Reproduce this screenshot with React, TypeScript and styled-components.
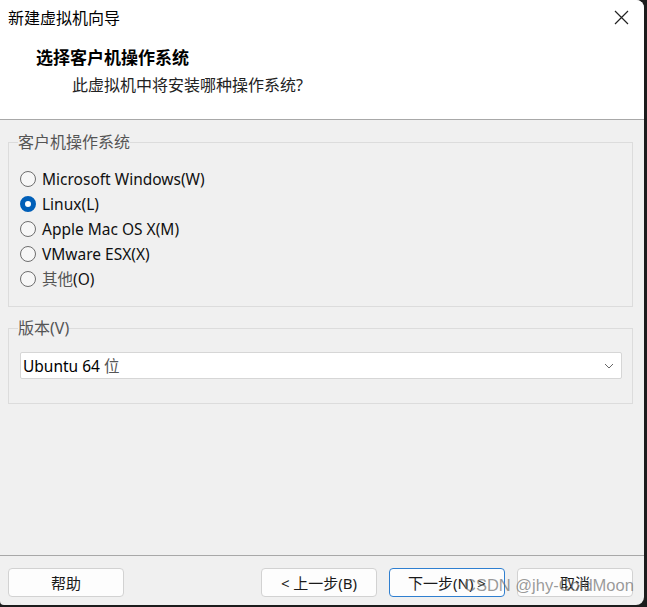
import React, { useState } from 'react';
import styled, { createGlobalStyle } from 'styled-components';

const GlobalStyle = createGlobalStyle`
  html, body {
    margin: 0;
    padding: 0;
    background: #1c1c1c;
  }
  * {
    box-sizing: border-box;
  }
`;

const UI_FONT = `"Noto Sans", "Noto Sans CJK SC", sans-serif`;

const Window = styled.div`
  width: 644px;
  height: 605px;
  background: #f0f0f0;
  border-radius: 0 8px 8px 4px;
  overflow: hidden;
  display: flex;
  flex-direction: column;
  position: relative;
  font-family: ${UI_FONT};
  color: #1a1a1a;
`;

const TopArea = styled.div`
  background: #ffffff;
  height: 120px;
  border-bottom: 1px solid #a8a8a8;
  display: flex;
  flex-direction: column;
`;

const TitleBar = styled.div`
  height: 34px;
  display: flex;
  align-items: center;
  justify-content: space-between;
  padding: 0 14px 0 8px;
`;

const Title = styled.span`
  font-size: 16px;
  color: #000;
`;

const CloseButton = styled.button`
  border: none;
  background: transparent;
  padding: 0;
  width: 18px;
  height: 18px;
  display: flex;
  align-items: center;
  justify-content: center;
  cursor: pointer;
`;

const Header = styled.div`
  padding: 12px 0 0 36px;
`;

const Heading = styled.div`
  font-size: 17px;
  font-weight: 700;
  line-height: 24px;
  color: #000;
`;

const SubHeading = styled.div`
  font-size: 16px;
  line-height: 24px;
  padding-left: 36px;
  margin-top: 3px;
  color: #222;
`;

const Body = styled.div`
  flex: 1;
  padding: 12px 11px 0 8px;
  display: flex;
  flex-direction: column;
  gap: 11px;
`;

const Group = styled.fieldset<{ $pad: string }>`
  margin: 0;
  border: 1px solid #dcdcdc;
  padding: ${p => p.$pad};
  min-width: 0;
`;

const Legend = styled.legend`
  font-size: 16px;
  line-height: 20px;
  color: #555;
  padding: 0;
  margin-left: -2px;
`;

const RadioList = styled.div`
  display: flex;
  flex-direction: column;
`;

const RadioRow = styled.label`
  height: 25px;
  display: flex;
  align-items: center;
  gap: 6px;
  font-size: 15.5px;
  color: #111;
  cursor: pointer;
`;

const RadioCircle = styled.span<{ $checked: boolean }>`
  width: 16px;
  height: 16px;
  border-radius: 50%;
  flex-shrink: 0;
  border: ${p => (p.$checked ? '5px solid #005fb8' : '1px solid #6e6e6e')};
  background: ${p => (p.$checked ? '#ffffff' : '#f7f7f7')};
`;

const Cjk = styled.span`
  color: #555;
`;

const Select = styled.div`
  height: 27px;
  background: #ffffff;
  border: 1px solid #d6d6d6;
  border-radius: 2px;
  display: flex;
  align-items: center;
  justify-content: space-between;
  padding: 0 7px 0 2px;
  font-size: 15.5px;
  color: #000;
`;

const Footer = styled.div`
  height: 50px;
  border-top: 1px solid #a8a8a8;
  padding: 12px 11px 0 8px;
  display: flex;
  align-items: flex-start;
`;

const ButtonGroup = styled.div`
  margin-left: auto;
  display: flex;
  gap: 12px;
`;

const Button = styled.button<{ $primary?: boolean }>`
  width: 116px;
  height: 29px;
  background: #fdfdfd;
  border: 1px solid ${p => (p.$primary ? '#2f7fd0' : '#d2d2d2')};
  border-radius: 4px;
  font-family: ${UI_FONT};
  font-size: 15px;
  color: #1a1a1a;
  padding: 0;
  cursor: pointer;
`;

const Watermark = styled.div`
  position: absolute;
  left: 464px;
  top: 576px;
  font-family: "Liberation Sans", Arial, sans-serif;
  font-size: 16.5px;
  color: rgba(110, 110, 110, 0.7);
  pointer-events: none;
  white-space: nowrap;
`;

const systems = [
  { id: 'win', label: <>Microsoft Windows(W)</> },
  { id: 'linux', label: <>Linux(L)</> },
  { id: 'mac', label: <>Apple Mac OS X(M)</> },
  { id: 'esx', label: <>VMware ESX(X)</> },
  { id: 'other', label: <><Cjk>其他</Cjk>(O)</> },
];

const CloseIcon = () => (
  <svg width="15" height="15" viewBox="0 0 15 15">
    <path d="M1 1L14 14M14 1L1 14" stroke="#222" strokeWidth="1.2" fill="none" />
  </svg>
);

const Chevron = () => (
  <svg width="10" height="6" viewBox="0 0 10 6">
    <path d="M1 1L5 5L9 1" stroke="#666" strokeWidth="1" fill="none" />
  </svg>
);

const App: React.FC = () => {
  const [os, setOs] = useState('linux');

  return (
    <>
      <GlobalStyle />
      <Window>
        <TopArea>
          <TitleBar>
            <Title>新建虚拟机向导</Title>
            <CloseButton aria-label="关闭"><CloseIcon /></CloseButton>
          </TitleBar>
          <Header>
            <Heading>选择客户机操作系统</Heading>
            <SubHeading>此虚拟机中将安装哪种操作系统?</SubHeading>
          </Header>
        </TopArea>

        <Body>
          <Group $pad="14px 8px 15px 11px">
            <Legend>客户机操作系统</Legend>
            <RadioList>
              {systems.map(s => (
                <RadioRow key={s.id} onClick={() => setOs(s.id)}>
                  <RadioCircle $checked={os === s.id} />
                  <span>{s.label}</span>
                </RadioRow>
              ))}
            </RadioList>
          </Group>

          <Group $pad="14px 10px 24px 11px">
            <Legend>版本(V)</Legend>
            <Select>
              <span>Ubuntu 64 <Cjk>位</Cjk></span>
              <Chevron />
            </Select>
          </Group>
        </Body>

        <Footer>
          <Button>帮助</Button>
          <ButtonGroup>
            <Button>&lt; 上一步(B)</Button>
            <Button $primary>下一步(N) &gt;</Button>
            <Button>取消</Button>
          </ButtonGroup>
        </Footer>

        <Watermark>CSDN @jhy-ColdMoon</Watermark>
      </Window>
    </>
  );
};

export default App;
